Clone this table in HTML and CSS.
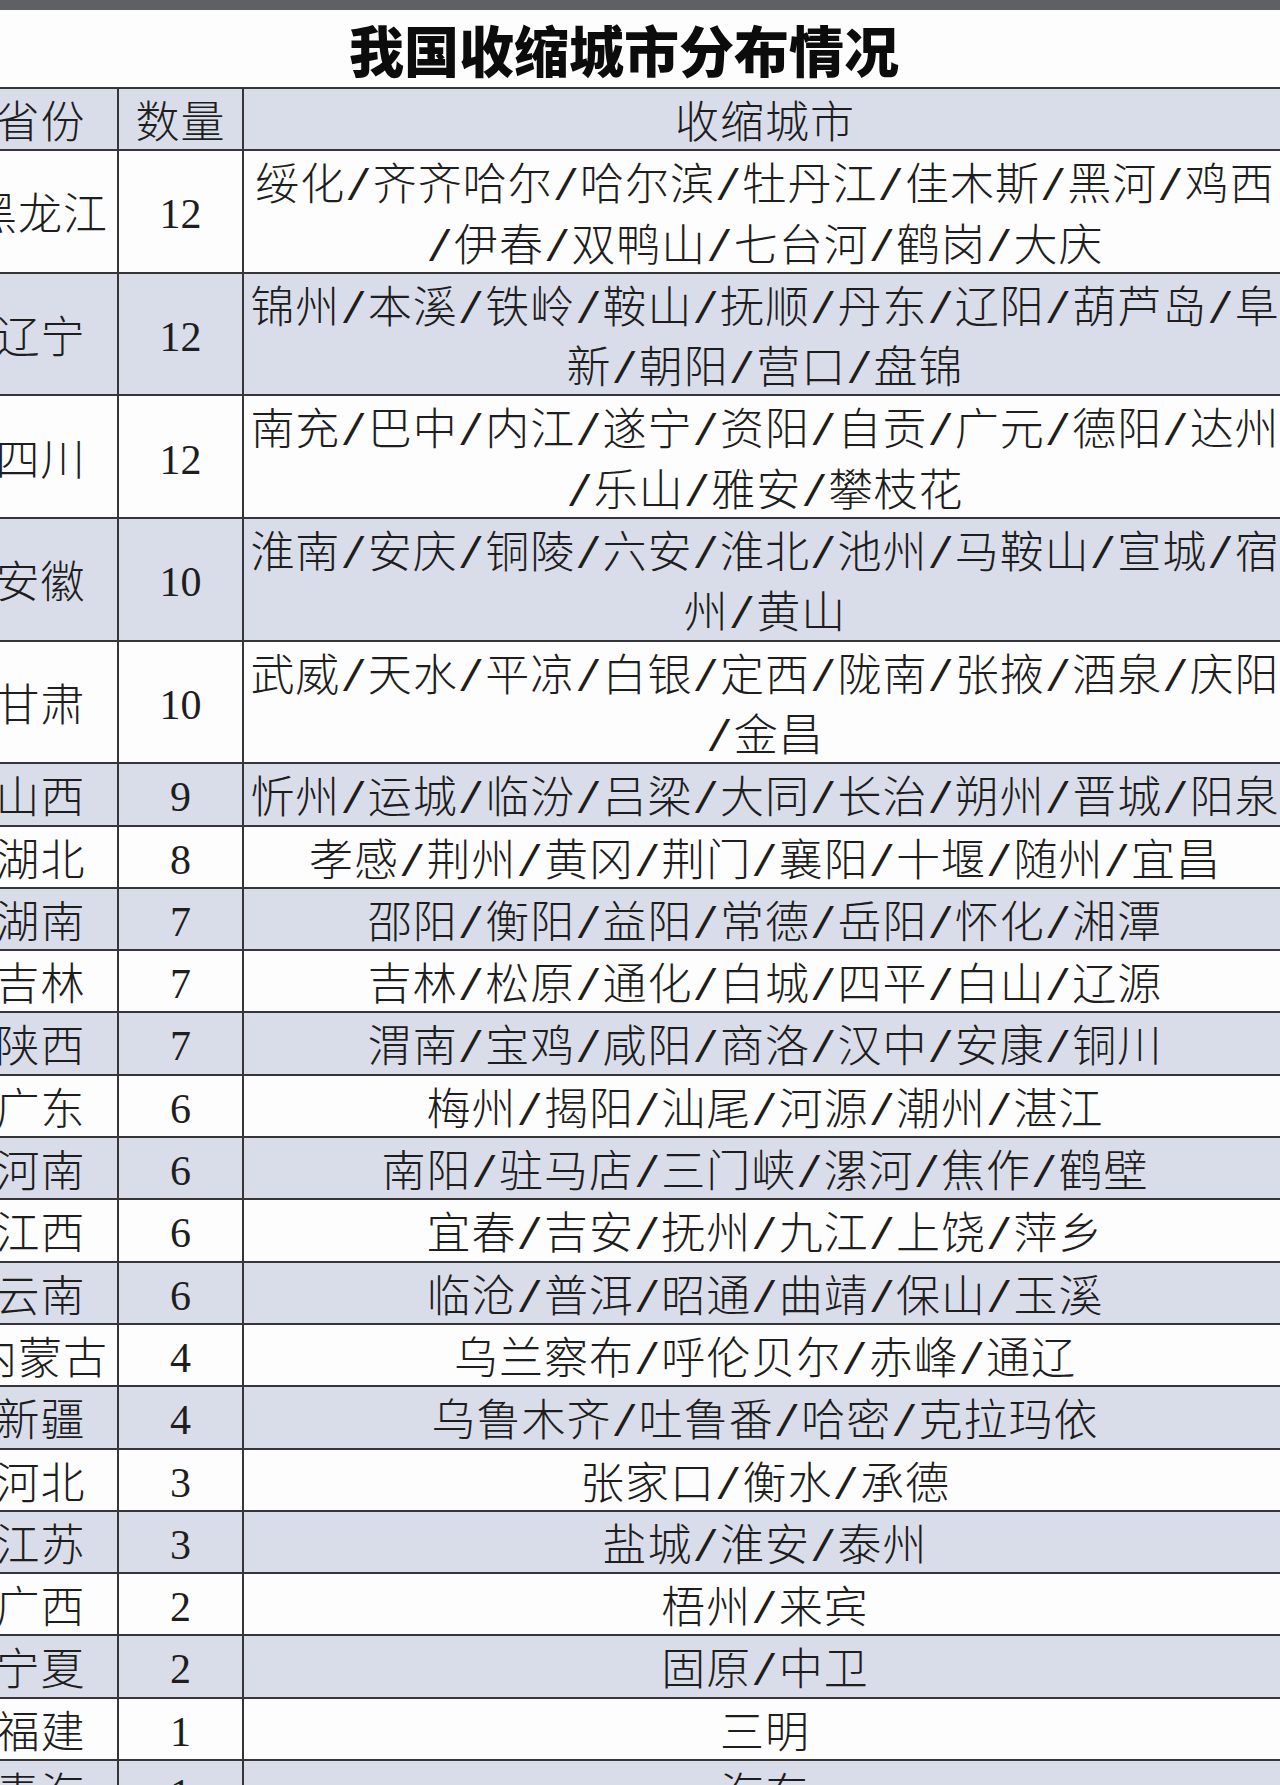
FILE: index.html
```html
<!DOCTYPE html>
<html lang="zh-CN">
<head>
<meta charset="utf-8">
<title>我国收缩城市分布情况</title>
<link rel="stylesheet" href="styles.css">
</head>
<body>
<div class="topbar"></div>
<div class="sheet">
  <h1 class="title">我国收缩城市分布情况</h1>
  <table class="grid">
    <colgroup>
      <col class="c-prov">
      <col class="c-num">
      <col class="c-city">
    </colgroup>
    <thead>
      <tr class="alt">
        <th class="prov">省份</th>
        <th class="prov">数量</th>
        <th class="city">收缩城市</th>
      </tr>
    </thead>
    <tbody>
      <tr><td class="prov">黑龙江</td><td class="num">12</td><td class="city">绥化<span class="sl">/</span>齐齐哈尔<span class="sl">/</span>哈尔滨<span class="sl">/</span>牡丹江<span class="sl">/</span>佳木斯<span class="sl">/</span>黑河<span class="sl">/</span>鸡西<br><span class="sl">/</span>伊春<span class="sl">/</span>双鸭山<span class="sl">/</span>七台河<span class="sl">/</span>鹤岗<span class="sl">/</span>大庆</td></tr>
      <tr class="alt"><td class="prov">辽宁</td><td class="num">12</td><td class="city">锦州<span class="sl">/</span>本溪<span class="sl">/</span>铁岭<span class="sl">/</span>鞍山<span class="sl">/</span>抚顺<span class="sl">/</span>丹东<span class="sl">/</span>辽阳<span class="sl">/</span>葫芦岛<span class="sl">/</span>阜<br>新<span class="sl">/</span>朝阳<span class="sl">/</span>营口<span class="sl">/</span>盘锦</td></tr>
      <tr><td class="prov">四川</td><td class="num">12</td><td class="city">南充<span class="sl">/</span>巴中<span class="sl">/</span>内江<span class="sl">/</span>遂宁<span class="sl">/</span>资阳<span class="sl">/</span>自贡<span class="sl">/</span>广元<span class="sl">/</span>德阳<span class="sl">/</span>达州<br><span class="sl">/</span>乐山<span class="sl">/</span>雅安<span class="sl">/</span>攀枝花</td></tr>
      <tr class="alt"><td class="prov">安徽</td><td class="num">10</td><td class="city">淮南<span class="sl">/</span>安庆<span class="sl">/</span>铜陵<span class="sl">/</span>六安<span class="sl">/</span>淮北<span class="sl">/</span>池州<span class="sl">/</span>马鞍山<span class="sl">/</span>宣城<span class="sl">/</span>宿<br>州<span class="sl">/</span>黄山</td></tr>
      <tr><td class="prov">甘肃</td><td class="num">10</td><td class="city">武威<span class="sl">/</span>天水<span class="sl">/</span>平凉<span class="sl">/</span>白银<span class="sl">/</span>定西<span class="sl">/</span>陇南<span class="sl">/</span>张掖<span class="sl">/</span>酒泉<span class="sl">/</span>庆阳<br><span class="sl">/</span>金昌</td></tr>
      <tr class="alt"><td class="prov">山西</td><td class="num">9</td><td class="city">忻州<span class="sl">/</span>运城<span class="sl">/</span>临汾<span class="sl">/</span>吕梁<span class="sl">/</span>大同<span class="sl">/</span>长治<span class="sl">/</span>朔州<span class="sl">/</span>晋城<span class="sl">/</span>阳泉</td></tr>
      <tr><td class="prov">湖北</td><td class="num">8</td><td class="city">孝感<span class="sl">/</span>荆州<span class="sl">/</span>黄冈<span class="sl">/</span>荆门<span class="sl">/</span>襄阳<span class="sl">/</span>十堰<span class="sl">/</span>随州<span class="sl">/</span>宜昌</td></tr>
      <tr class="alt"><td class="prov">湖南</td><td class="num">7</td><td class="city">邵阳<span class="sl">/</span>衡阳<span class="sl">/</span>益阳<span class="sl">/</span>常德<span class="sl">/</span>岳阳<span class="sl">/</span>怀化<span class="sl">/</span>湘潭</td></tr>
      <tr><td class="prov">吉林</td><td class="num">7</td><td class="city">吉林<span class="sl">/</span>松原<span class="sl">/</span>通化<span class="sl">/</span>白城<span class="sl">/</span>四平<span class="sl">/</span>白山<span class="sl">/</span>辽源</td></tr>
      <tr class="alt"><td class="prov">陕西</td><td class="num">7</td><td class="city">渭南<span class="sl">/</span>宝鸡<span class="sl">/</span>咸阳<span class="sl">/</span>商洛<span class="sl">/</span>汉中<span class="sl">/</span>安康<span class="sl">/</span>铜川</td></tr>
      <tr><td class="prov">广东</td><td class="num">6</td><td class="city">梅州<span class="sl">/</span>揭阳<span class="sl">/</span>汕尾<span class="sl">/</span>河源<span class="sl">/</span>潮州<span class="sl">/</span>湛江</td></tr>
      <tr class="alt"><td class="prov">河南</td><td class="num">6</td><td class="city">南阳<span class="sl">/</span>驻马店<span class="sl">/</span>三门峡<span class="sl">/</span>漯河<span class="sl">/</span>焦作<span class="sl">/</span>鹤壁</td></tr>
      <tr><td class="prov">江西</td><td class="num">6</td><td class="city">宜春<span class="sl">/</span>吉安<span class="sl">/</span>抚州<span class="sl">/</span>九江<span class="sl">/</span>上饶<span class="sl">/</span>萍乡</td></tr>
      <tr class="alt"><td class="prov">云南</td><td class="num">6</td><td class="city">临沧<span class="sl">/</span>普洱<span class="sl">/</span>昭通<span class="sl">/</span>曲靖<span class="sl">/</span>保山<span class="sl">/</span>玉溪</td></tr>
      <tr><td class="prov">内蒙古</td><td class="num">4</td><td class="city">乌兰察布<span class="sl">/</span>呼伦贝尔<span class="sl">/</span>赤峰<span class="sl">/</span>通辽</td></tr>
      <tr class="alt"><td class="prov">新疆</td><td class="num">4</td><td class="city">乌鲁木齐<span class="sl">/</span>吐鲁番<span class="sl">/</span>哈密<span class="sl">/</span>克拉玛依</td></tr>
      <tr><td class="prov">河北</td><td class="num">3</td><td class="city">张家口<span class="sl">/</span>衡水<span class="sl">/</span>承德</td></tr>
      <tr class="alt"><td class="prov">江苏</td><td class="num">3</td><td class="city">盐城<span class="sl">/</span>淮安<span class="sl">/</span>泰州</td></tr>
      <tr><td class="prov">广西</td><td class="num">2</td><td class="city">梧州<span class="sl">/</span>来宾</td></tr>
      <tr class="alt"><td class="prov">宁夏</td><td class="num">2</td><td class="city">固原<span class="sl">/</span>中卫</td></tr>
      <tr><td class="prov">福建</td><td class="num">1</td><td class="city">三明</td></tr>
      <tr class="alt"><td class="prov">青海</td><td class="num">1</td><td class="city">海东</td></tr>
    </tbody>
  </table>
</div>
</body>
</html>
```

FILE: styles.css
```css
html, body {
  margin: 0;
  padding: 0;
  overflow: hidden;
  background: #fdfdfd;
}

body {
  color: #1e1e1e;
  font-family: "Noto Sans CJK SC", "Noto Sans", sans-serif;
}

.topbar {
  height: 10px;
  background: #5f6063;
}

.sheet {
  width: 1324px;
  margin-left: -38px;
}

.title {
  margin: 0;
  height: 76px;
  padding-bottom: 1px;
  display: flex;
  align-items: center;
  justify-content: center;
  font-family: "Noto Sans CJK SC", sans-serif;
  font-size: 55px;
  line-height: 1;
  font-weight: 900;
  color: #0c0c0c;
}

.grid {
  width: 1324px;
  table-layout: fixed;
  border-collapse: collapse;
}

.c-prov { width: 155px; }
.c-num { width: 125px; }
.c-city { width: 1044px; }

.grid th,
.grid td {
  border: 2px solid #363638;
  padding: 0;
  line-height: 60.3px;
  text-align: center;
  vertical-align: middle;
  font-weight: 300;
  white-space: nowrap;
  overflow: hidden;
}

.grid tr {
  background: #fdfdfd;
}

.grid tr.alt {
  background: #d9dce9;
}

.prov {
  font-family: "Noto Sans CJK SC", sans-serif;
  font-size: 44px;
  letter-spacing: 1px;
}

.num {
  font-family: "Liberation Serif", serif;
  font-size: 42px;
}

.grid td.num {
  padding-top: 6px;
  line-height: 54.3px;
}

.city {
  font-family: "Noto Sans CJK SC", sans-serif;
  font-size: 44px;
  letter-spacing: 1px;
}

.sl {
  font-family: "Liberation Mono", monospace;
  line-height: 0;
}
```
